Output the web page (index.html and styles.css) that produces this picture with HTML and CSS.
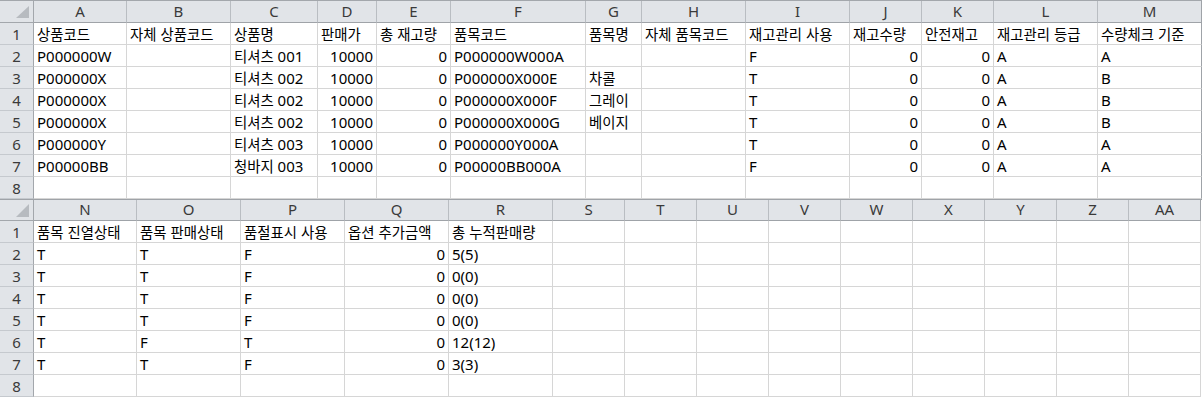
FILE: index.html
```html
<!DOCTYPE html>
<html lang="ko">
<head>
<meta charset="utf-8">
<title>Sheet</title>
<link rel="stylesheet" href="styles.css">
</head>
<body>
<div class="pane top">
  <div class="corner"><svg width="34" height="21" viewBox="0 0 34 21"><polygon points="16,17 29,17 29,5" fill="#b7bbc0"/></svg></div>
  <div class="ch">A</div><div class="ch">B</div><div class="ch">C</div><div class="ch">D</div><div class="ch">E</div><div class="ch">F</div><div class="ch">G</div><div class="ch">H</div><div class="ch">I</div><div class="ch">J</div><div class="ch">K</div><div class="ch">L</div><div class="ch last">M</div>

  <div class="rh">1</div>
  <div class="c"><span class="k">상품코드</span></div><div class="c"><span class="k">자체 상품코드</span></div><div class="c"><span class="k">상품명</span></div><div class="c"><span class="k">판매가</span></div><div class="c"><span class="k">총 재고량</span></div><div class="c"><span class="k">품목코드</span></div><div class="c"><span class="k">품목명</span></div><div class="c"><span class="k">자체 품목코드</span></div><div class="c"><span class="k">재고관리 사용</span></div><div class="c"><span class="k">재고수량</span></div><div class="c"><span class="k">안전재고</span></div><div class="c"><span class="k">재고관리 등급</span></div><div class="c last"><span class="k">수량체크 기준</span></div>

  <div class="rh">2</div>
  <div class="c">P000000W</div><div class="c"></div><div class="c"><span class="k">티셔츠</span> 001</div><div class="c r">10000</div><div class="c r">0</div><div class="c">P000000W000A</div><div class="c"></div><div class="c"></div><div class="c">F</div><div class="c r">0</div><div class="c r">0</div><div class="c">A</div><div class="c last">A</div>

  <div class="rh">3</div>
  <div class="c">P000000X</div><div class="c"></div><div class="c"><span class="k">티셔츠</span> 002</div><div class="c r">10000</div><div class="c r">0</div><div class="c">P000000X000E</div><div class="c"><span class="k">차콜</span></div><div class="c"></div><div class="c">T</div><div class="c r">0</div><div class="c r">0</div><div class="c">A</div><div class="c last">B</div>

  <div class="rh">4</div>
  <div class="c">P000000X</div><div class="c"></div><div class="c"><span class="k">티셔츠</span> 002</div><div class="c r">10000</div><div class="c r">0</div><div class="c">P000000X000F</div><div class="c"><span class="k">그레이</span></div><div class="c"></div><div class="c">T</div><div class="c r">0</div><div class="c r">0</div><div class="c">A</div><div class="c last">B</div>

  <div class="rh">5</div>
  <div class="c">P000000X</div><div class="c"></div><div class="c"><span class="k">티셔츠</span> 002</div><div class="c r">10000</div><div class="c r">0</div><div class="c">P000000X000G</div><div class="c"><span class="k">베이지</span></div><div class="c"></div><div class="c">T</div><div class="c r">0</div><div class="c r">0</div><div class="c">A</div><div class="c last">B</div>

  <div class="rh">6</div>
  <div class="c">P000000Y</div><div class="c"></div><div class="c"><span class="k">티셔츠</span> 003</div><div class="c r">10000</div><div class="c r">0</div><div class="c">P000000Y000A</div><div class="c"></div><div class="c"></div><div class="c">T</div><div class="c r">0</div><div class="c r">0</div><div class="c">A</div><div class="c last">A</div>

  <div class="rh">7</div>
  <div class="c">P00000BB</div><div class="c"></div><div class="c"><span class="k">청바지</span> 003</div><div class="c r">10000</div><div class="c r">0</div><div class="c">P00000BB000A</div><div class="c"></div><div class="c"></div><div class="c">F</div><div class="c r">0</div><div class="c r">0</div><div class="c">A</div><div class="c last">A</div>

  <div class="rh">8</div>
  <div class="c"></div><div class="c"></div><div class="c"></div><div class="c"></div><div class="c"></div><div class="c"></div><div class="c"></div><div class="c"></div><div class="c"></div><div class="c"></div><div class="c"></div><div class="c"></div><div class="c last"></div>
</div>

<div class="pane bottom">
  <div class="corner"><svg width="34" height="20" viewBox="0 0 34 20"><polygon points="16,17 29,17 29,4" fill="#b7bbc0"/></svg></div>
  <div class="ch">N</div><div class="ch">O</div><div class="ch">P</div><div class="ch">Q</div><div class="ch">R</div><div class="ch">S</div><div class="ch">T</div><div class="ch">U</div><div class="ch">V</div><div class="ch">W</div><div class="ch">X</div><div class="ch">Y</div><div class="ch">Z</div><div class="ch last">AA</div>

  <div class="rh">1</div>
  <div class="c"><span class="k">품목 진열상태</span></div><div class="c"><span class="k">품목 판매상태</span></div><div class="c"><span class="k">품절표시 사용</span></div><div class="c"><span class="k">옵션 추가금액</span></div><div class="c"><span class="k">총 누적판매량</span></div><div class="c"></div><div class="c"></div><div class="c"></div><div class="c"></div><div class="c"></div><div class="c"></div><div class="c"></div><div class="c"></div><div class="c"></div>

  <div class="rh">2</div>
  <div class="c">T</div><div class="c">T</div><div class="c">F</div><div class="c r">0</div><div class="c">5(5)</div><div class="c"></div><div class="c"></div><div class="c"></div><div class="c"></div><div class="c"></div><div class="c"></div><div class="c"></div><div class="c"></div><div class="c"></div>

  <div class="rh">3</div>
  <div class="c">T</div><div class="c">T</div><div class="c">F</div><div class="c r">0</div><div class="c">0(0)</div><div class="c"></div><div class="c"></div><div class="c"></div><div class="c"></div><div class="c"></div><div class="c"></div><div class="c"></div><div class="c"></div><div class="c"></div>

  <div class="rh">4</div>
  <div class="c">T</div><div class="c">T</div><div class="c">F</div><div class="c r">0</div><div class="c">0(0)</div><div class="c"></div><div class="c"></div><div class="c"></div><div class="c"></div><div class="c"></div><div class="c"></div><div class="c"></div><div class="c"></div><div class="c"></div>

  <div class="rh">5</div>
  <div class="c">T</div><div class="c">T</div><div class="c">F</div><div class="c r">0</div><div class="c">0(0)</div><div class="c"></div><div class="c"></div><div class="c"></div><div class="c"></div><div class="c"></div><div class="c"></div><div class="c"></div><div class="c"></div><div class="c"></div>

  <div class="rh">6</div>
  <div class="c">T</div><div class="c">F</div><div class="c">T</div><div class="c r">0</div><div class="c">12(12)</div><div class="c"></div><div class="c"></div><div class="c"></div><div class="c"></div><div class="c"></div><div class="c"></div><div class="c"></div><div class="c"></div><div class="c"></div>

  <div class="rh">7</div>
  <div class="c">T</div><div class="c">T</div><div class="c">F</div><div class="c r">0</div><div class="c">3(3)</div><div class="c"></div><div class="c"></div><div class="c"></div><div class="c"></div><div class="c"></div><div class="c"></div><div class="c"></div><div class="c"></div><div class="c"></div>

  <div class="rh">8</div>
  <div class="c"></div><div class="c"></div><div class="c"></div><div class="c"></div><div class="c"></div><div class="c"></div><div class="c"></div><div class="c"></div><div class="c"></div><div class="c"></div><div class="c"></div><div class="c"></div><div class="c"></div><div class="c"></div>
</div>
</body>
</html>
```

FILE: styles.css
```css
html, body {
  margin: 0;
  padding: 0;
  background: #ffffff;
}

body {
  width: 1202px;
  height: 397px;
  overflow: hidden;
  font-family: "Noto Sans", "Noto Sans CJK KR", sans-serif;
  font-size: 15px;
  color: #000000;
}

.pane {
  display: grid;
}

.pane.top {
  grid-template-columns: 34px 93px 104px 87px 59px 74px 135px 56px 104px 104px 72px 72px 104px 104px;
  grid-template-rows: 22px repeat(8, 22px);
  border-top: 1px solid #a3a7ac;
  border-bottom: 1px solid #9fa3a8;
  width: 1202px;
}

.pane.bottom {
  grid-template-columns: 34px 103px 104px 104px 104px 104px repeat(9, 72px);
  grid-template-rows: 21px repeat(8, 22px);
  width: 1201px;
}

.pane > div {
  box-sizing: border-box;
  white-space: nowrap;
  overflow: hidden;
}

.corner {
  background: #e1e4e8;
  border-right: 1px solid #a3a7ac;
  border-bottom: 1px solid #a3a7ac;
}

.corner svg {
  display: block;
}

.ch {
  background: #e1e4e8;
  border-right: 1px solid #b9bdc2;
  border-bottom: 1px solid #9fa3a8;
  text-align: center;
  line-height: 20px;
  color: #3a3a3a;
}

.bottom .ch {
  line-height: 18px;
}

.ch.last {
  border-right-color: #9fa3a8;
}

.rh {
  background: #e1e4e8;
  border-right: 1px solid #a3a7ac;
  border-bottom: 1px solid #c5c9ce;
  text-align: center;
  line-height: 20px;
  padding-top: 1px;
  color: #3a3a3a;
}

.c {
  border-right: 1px solid #d6d6d6;
  border-bottom: 1px solid #d6d6d6;
  line-height: 20px;
  padding: 1px 3px 0 3px;
}

.top .c.last {
  border-right-color: #9fa3a8;
}

.c.r {
  text-align: right;
}

.k {
  font-family: "Noto Sans CJK KR", sans-serif;
  font-size: 14.4px;
}
```
